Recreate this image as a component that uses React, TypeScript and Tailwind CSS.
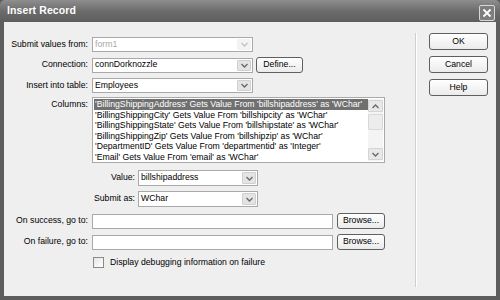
import React from "react";

const rows = [
  "'BillingShippingAddress' Gets Value From 'billshipaddress' as 'WChar'",
  "'BillingShippingCity' Gets Value From 'billshipcity' as 'WChar'",
  "'BillingShippingState' Gets Value From 'billshipstate' as 'WChar'",
  "'BillingShippingZip' Gets Value From 'billshipzip' as 'WChar'",
  "'DepartmentID' Gets Value From 'departmentid' as 'Integer'",
  "'Email' Gets Value From 'email' as 'WChar'",
];

function Chevron({ up = false, faded = false }: { up?: boolean; faded?: boolean }) {
  return (
    <svg width="7" height="5" viewBox="0 0 7 5">
      <path
        d={up ? "M0.5 4 L3.5 1 L6.5 4" : "M0.5 1 L3.5 4 L6.5 1"}
        fill="none"
        stroke={faded ? "#c4c4c4" : "#6a6a6a"}
        strokeWidth="1.4"
      />
    </svg>
  );
}

function Select({ value, width, disabled = false }: { value: string; width: string; disabled?: boolean }) {
  return (
    <div className={`${width} h-[15px] flex items-stretch bg-white border border-[#a9a9a9]`}>
      <div className={`flex-1 flex items-center pl-[2px] ${disabled ? "text-[#a8a8a8]" : "text-black"}`}>{value}</div>
      <div className={`w-[14px] m-[1px] flex items-center justify-center rounded-[1px] ${disabled ? "bg-[#f3f3f3]" : "bg-[#e4e4e4] border border-[#d0d0d0]"}`}>
        <Chevron faded={disabled} />
      </div>
    </div>
  );
}

function Button({ children, className = "" }: { children: React.ReactNode; className?: string }) {
  return (
    <div
      className={`flex items-center justify-center rounded-[3px] border border-[#5f5f5f] bg-gradient-to-b from-white to-[#ebebeb] text-black ${className}`}
    >
      {children}
    </div>
  );
}

function Label({ children, w }: { children: React.ReactNode; w: string }) {
  return <div className={`${w} text-right shrink-0`}>{children}</div>;
}

export default function App() {
  return (
    <div
      className="w-[500px] h-[300px] bg-[#5d5d5d] px-[4px] pb-[4px] flex flex-col text-[8.7px] text-black overflow-hidden"
      style={{ fontFamily: "'Liberation Sans', Arial, sans-serif" }}
    >
      <div className="h-[22px] shrink-0 flex items-center justify-between bg-gradient-to-b from-[#8e8e8e] via-[#6c6c6c] to-[#5e5e5e] -mx-[4px] pl-[7px] pr-[5px] rounded-t-[5px]">
        <span className="text-white font-bold text-[10.5px] tracking-[0.1px]">Insert Record</span>
        <div className="w-[16px] h-[16px] mt-[4px] rounded-[2px] border border-[#d8d8d8] bg-[#7e7e7e] flex items-center justify-center">
          <svg width="10" height="10" viewBox="0 0 10 10">
            <path d="M1.5 1.5 L8.5 8.5 M8.5 1.5 L1.5 8.5" stroke="white" strokeWidth="1.8" />
          </svg>
        </div>
      </div>

      <div className="flex-1 bg-[#efefef] flex">
        <div className="w-[411px] shrink-0 pt-[15px] flex flex-col">
          <div className="flex flex-col gap-[5px]">
            <div className="flex items-center gap-[4px]">
              <Label w="w-[84px]">Submit values from:</Label>
              <Select value="form1" width="w-[161px]" disabled />
            </div>
            <div className="flex items-center gap-[4px]">
              <Label w="w-[84px]">Connection:</Label>
              <Select value="connDorknozzle" width="w-[161px]" />
              <Button className="ml-[-1px] w-[47px] h-[16px]">Define...</Button>
            </div>
            <div className="flex items-center gap-[4px]">
              <Label w="w-[84px]">Insert into table:</Label>
              <Select value="Employees" width="w-[161px]" />
            </div>
          </div>

          <div className="flex gap-[4px] mt-[4px]">
            <Label w="w-[84px] pt-[1px]">Columns:</Label>
            <div className="w-[293px] h-[66px] bg-white border border-[#a9a9a9] flex p-[1px]">
              <div className="flex-1 flex flex-col leading-[10.6px] whitespace-nowrap overflow-hidden">
                {rows.map((r, i) => (
                  <div key={i} className={`pl-[1px] ${i === 0 ? "bg-[#707070] text-white" : ""}`}>
                    {r}
                  </div>
                ))}
              </div>
              <div className="w-[15px] flex flex-col bg-[#f4f4f4] py-[1px]">
                <div className="h-[12px] flex items-center justify-center bg-[#e8e8e8] border border-[#d4d4d4] rounded-[1px]">
                  <Chevron up />
                </div>
                <div className="h-[16px] mt-[2px] bg-[#ececec] border border-[#d8d8d8] rounded-[1px]" />
                <div className="flex-1" />
                <div className="h-[12px] flex items-center justify-center bg-[#e8e8e8] border border-[#d4d4d4] rounded-[1px]">
                  <Chevron />
                </div>
              </div>
            </div>
          </div>

          <div className="flex flex-col gap-[5px] mt-[7px]">
            <div className="flex items-center gap-[3px]">
              <Label w="w-[131px]">Value:</Label>
              <Select value="billshipaddress" width="w-[120px] !h-[16px]" />
            </div>
            <div className="flex items-center gap-[3px]">
              <Label w="w-[131px]">Submit as:</Label>
              <Select value="WChar" width="w-[120px] !h-[16px]" />
            </div>
          </div>

          <div className="flex flex-col gap-[5px] mt-[6px]">
            <div className="flex items-center gap-[4px]">
              <Label w="w-[84px]">On success, go to:</Label>
              <div className="w-[241px] h-[15px] bg-white border border-[#a9a9a9]" />
              <Button className="w-[48px] h-[16px]">Browse...</Button>
            </div>
            <div className="flex items-center gap-[4px]">
              <Label w="w-[84px]">On failure, go to:</Label>
              <div className="w-[241px] h-[15px] bg-white border border-[#a9a9a9]" />
              <Button className="w-[48px] h-[16px]">Browse...</Button>
            </div>
          </div>

          <div className="flex items-center mt-[6px] pl-[89px] gap-[6px]">
            <div className="w-[11px] h-[11px] border border-[#8a8a8a] bg-gradient-to-br from-[#e6e6e6] to-white" />
            <span>Display debugging information on failure</span>
          </div>
        </div>

        <div className="mt-[11px] mb-[9px] w-px bg-[#cfcfcf] border-r border-white box-content" />

        <div className="flex flex-col gap-[6px] pt-[11px] pl-[12px]">
          <Button className="w-[59px] h-[17px]">OK</Button>
          <Button className="w-[59px] h-[17px]">Cancel</Button>
          <Button className="w-[59px] h-[17px]">Help</Button>
        </div>
      </div>
    </div>
  );
}
